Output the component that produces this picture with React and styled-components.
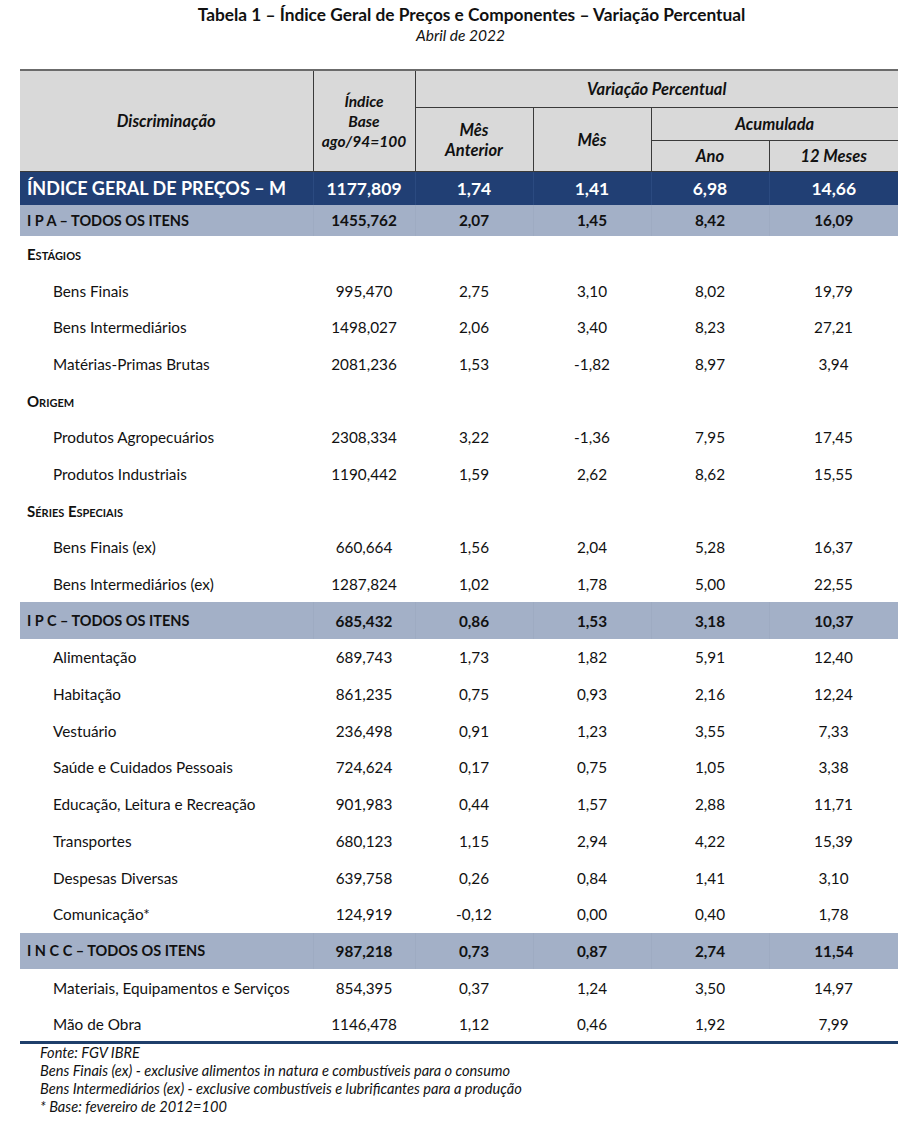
import React from 'react';
import styled, { createGlobalStyle } from 'styled-components';

const GlobalStyle = createGlobalStyle`
  body {
    margin: 0;
    background: #fff;
    font-family: Lato, 'Open Sans', sans-serif;
    color: #111;
  }
`;

const rows = [
  { kind: 'section', label: 'Estágios' },
  { label: 'Bens Finais', v: ['995,470', '2,75', '3,10', '8,02', '19,79'] },
  { label: 'Bens Intermediários', v: ['1498,027', '2,06', '3,40', '8,23', '27,21'] },
  { label: 'Matérias-Primas Brutas', v: ['2081,236', '1,53', '-1,82', '8,97', '3,94'] },
  { kind: 'section', label: 'Origem' },
  { label: 'Produtos Agropecuários', v: ['2308,334', '3,22', '-1,36', '7,95', '17,45'] },
  { label: 'Produtos Industriais', v: ['1190,442', '1,59', '2,62', '8,62', '15,55'] },
  { kind: 'section', label: 'Séries Especiais' },
  { label: 'Bens Finais (ex)', v: ['660,664', '1,56', '2,04', '5,28', '16,37'] },
  { label: 'Bens Intermediários (ex)', v: ['1287,824', '1,02', '1,78', '5,00', '22,55'] },
  { kind: 'band', label: 'I P C – TODOS OS ITENS', v: ['685,432', '0,86', '1,53', '3,18', '10,37'] },
  { label: 'Alimentação', v: ['689,743', '1,73', '1,82', '5,91', '12,40'] },
  { label: 'Habitação', v: ['861,235', '0,75', '0,93', '2,16', '12,24'] },
  { label: 'Vestuário', v: ['236,498', '0,91', '1,23', '3,55', '7,33'] },
  { label: 'Saúde e Cuidados Pessoais', v: ['724,624', '0,17', '0,75', '1,05', '3,38'] },
  { label: 'Educação, Leitura e Recreação', v: ['901,983', '0,44', '1,57', '2,88', '11,71'] },
  { label: 'Transportes', v: ['680,123', '1,15', '2,94', '4,22', '15,39'] },
  { label: 'Despesas Diversas', v: ['639,758', '0,26', '0,84', '1,41', '3,10'] },
  { label: 'Comunicação*', v: ['124,919', '-0,12', '0,00', '0,40', '1,78'] },
  { kind: 'band', label: 'I N C C – TODOS OS ITENS', v: ['987,218', '0,73', '0,87', '2,74', '11,54'] },
  { label: 'Materiais, Equipamentos e Serviços', v: ['854,395', '0,37', '1,24', '3,50', '14,97'] },
  { label: 'Mão de Obra', v: ['1146,478', '1,12', '0,46', '1,92', '7,99'] },
];

function App() {
  return (
    <Page>
      <GlobalStyle />
      <Title>Tabela 1 – Índice Geral de Preços e Componentes – Variação Percentual</Title>
      <Subtitle>Abril de 2022</Subtitle>
      <Table>
        <colgroup>
          <col style={{ width: 293 }} />
          <col style={{ width: 102 }} />
          <col style={{ width: 118 }} />
          <col style={{ width: 118 }} />
          <col style={{ width: 118 }} />
          <col style={{ width: 129 }} />
        </colgroup>
        <thead>
          <tr>
            <Th rowSpan={3}>Discriminação</Th>
            <Th rowSpan={3} $tight>Índice<br />Base<br />ago/94=100</Th>
            <Th colSpan={4} $h={36} $last>Variação Percentual</Th>
          </tr>
          <tr>
            <Th rowSpan={2}>Mês<br />Anterior</Th>
            <Th rowSpan={2}>Mês</Th>
            <Th colSpan={2} $h={32} $last>Acumulada</Th>
          </tr>
          <tr>
            <Th $h={30}>Ano</Th>
            <Th $h={30} $last>12 Meses</Th>
          </tr>
        </thead>
        <tbody>
          <MainRow>
            <MainLabel>ÍNDICE GERAL DE PREÇOS – M</MainLabel>
            {['1177,809', '1,74', '1,41', '6,98', '14,66'].map((x, i) => (
              <MainValue key={i}>{x}</MainValue>
            ))}
          </MainRow>
          <BandRow $h={31}>
            <Label $bold $pad={7}>I P A – TODOS OS ITENS</Label>
            {['1455,762', '2,07', '1,45', '8,42', '16,09'].map((x, i) => (
              <Value key={i} $bold>{x}</Value>
            ))}
          </BandRow>
          {rows.map((r, idx) => {
            if (r.kind === 'section') {
              return (
                <Row key={idx}>
                  <Section colSpan={6}>{r.label}</Section>
                </Row>
              );
            }
            if (r.kind === 'band') {
              return (
                <BandRow key={idx} $h={36.7}>
                  <Label $bold $pad={7}>{r.label}</Label>
                  {r.v.map((x, i) => (
                    <Value key={i} $bold>{x}</Value>
                  ))}
                </BandRow>
              );
            }
            return (
              <Row key={idx}>
                <Label $pad={33}>{r.label}</Label>
                {r.v.map((x, i) => (
                  <Value key={i}>{x}</Value>
                ))}
              </Row>
            );
          })}
        </tbody>
      </Table>
      <Notes>
        <p>Fonte: FGV IBRE</p>
        <p>Bens Finais (ex) - exclusive alimentos in natura e combustíveis para o consumo</p>
        <p>Bens Intermediários (ex) - exclusive combustíveis e lubrificantes para a produção</p>
        <p>* Base: fevereiro de 2012=100</p>
      </Notes>
    </Page>
  );
}

const Page = styled.div`
  width: 911px;
  padding-top: 4px;
`;

const Title = styled.h1`
  margin: 0;
  padding-left: 32px;
  text-align: center;
  font-size: 17.3px;
  font-weight: 700;
  line-height: 22px;
`;

const Subtitle = styled.div`
  padding-left: 10px;
  text-align: center;
  font-size: 15.5px;
  font-style: italic;
  line-height: 19px;
  margin-bottom: 24px;
`;

const Table = styled.table`
  margin-left: 20px;
  width: 878px;
  border-collapse: collapse;
  table-layout: fixed;
  border-top: 2px solid #6b6b6b;
  border-bottom: 3px solid #1f3f6b;
`;

const Th = styled.th`
  background: #d9d9d9;
  height: ${(p) => (p.$h ? `${p.$h}px` : 'auto')};
  padding: 0;
  font-size: ${(p) => (p.$tight ? 15.5 : 16.5)}px;
  font-style: italic;
  font-weight: 700;
  line-height: 20px;
  text-align: center;
  border: 1px solid #3a3a3a;
  border-top: none;
  border-right: ${(p) => (p.$last ? 'none' : '1px solid #3a3a3a')};
  &:first-child {
    border-left: none;
  }
`;

const MainRow = styled.tr`
  background: #213f74;
  color: #fff;
  height: 33px;
`;

const MainLabel = styled.td`
  padding: 0 0 0 7px;
  font-size: 18px;
  font-weight: 700;
  white-space: nowrap;
`;

const MainValue = styled.td`
  text-align: center;
  font-size: 17.5px;
  font-weight: 700;
  padding: 0;
  border-left: 1px solid #2b4a80;
`;

const BandRow = styled.tr`
  background: #a3b0c7;
  height: ${(p) => p.$h}px;
`;

const Row = styled.tr`
  height: 36.7px;
`;

const Label = styled.td`
  padding: 0 0 0 ${(p) => p.$pad}px;
  font-size: ${(p) => (p.$bold ? 14.5 : 15.3)}px;
  font-weight: ${(p) => (p.$bold ? 700 : 400)};
  white-space: nowrap;
`;

const Value = styled.td`
  padding: 0;
  text-align: center;
  font-size: 15.3px;
  font-weight: ${(p) => (p.$bold ? 700 : 400)};
  ${BandRow} & {
    border-left: 1px solid #9eabc2;
  }
`;

const Section = styled.td`
  padding: 0 0 0 7px;
  font-size: 15px;
  font-weight: 700;
  font-variant: small-caps;
`;

const Notes = styled.div`
  margin-left: 40px;
  font-size: 14.6px;
  font-style: italic;
  line-height: 18px;
  p {
    margin: 0;
  }
`;

export default App;
